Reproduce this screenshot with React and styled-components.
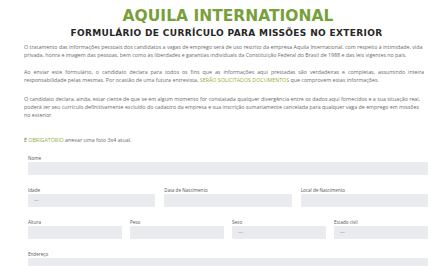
import React from "react";
import styled, { createGlobalStyle } from "styled-components";

const Global = createGlobalStyle`
  html, body { margin: 0; padding: 0; background: #ffffff; }
  body { font-family: "Open Sans", "Liberation Sans", sans-serif; }
  * { box-sizing: border-box; }
`;

const Page = styled.div`
  width: 448px;
  height: 266px;
  overflow: hidden;
  padding: 7px 24px 0 24px;
`;

const Header = styled.header`
  margin: 0 -4px 0 4px;
  text-align: center;
`;

const Title = styled.h1`
  margin: 0;
  font-family: "DejaVu Sans", "Liberation Sans", sans-serif;
  font-weight: 700;
  font-size: 15.5px;
  line-height: 18px;
  color: #77a03a;
`;

const Subtitle = styled.h2`
  margin: 2px 0 0 -3px;
  font-family: "DejaVu Sans", "Liberation Sans", sans-serif;
  font-weight: 700;
  font-size: 9px;
  line-height: 12px;
  letter-spacing: 0.35px;
  color: #262626;
`;

const Para = styled.p`
  margin: ${(p) => p.$mt || 0}px 0 0 0;
  font-size: 5.3px;
  line-height: 8px;
  color: #6b6b6b;
  text-align: ${(p) => (p.$justify ? "justify" : "left")};
`;

const Accent = styled.span`
  color: #8fae3c;
`;

const Form = styled.div`
  margin: 11px -4px 0 4px;
  display: flex;
  flex-direction: column;
  gap: 12px;
`;

const Row = styled.div`
  display: grid;
  grid-template-columns: repeat(${(p) => p.$cols}, 1fr);
  column-gap: ${(p) => (p.$cols === 4 ? 8 : 9)}px;
`;

const Field = styled.div`
  display: flex;
  flex-direction: column;
`;

const Label = styled.label`
  font-size: 4.6px;
  line-height: 6px;
  color: #555;
  margin-bottom: 1px;
`;

const Input = styled.div`
  height: 13px;
  background: #e9ebee;
  border-radius: 1px;
  font-size: 5px;
  line-height: 13px;
  color: #9a9a9a;
  padding-left: 6px;
`;

const F = ({ label, value }) => (
  <Field>
    <Label>{label}</Label>
    <Input>{value}</Input>
  </Field>
);

export default function App() {
  return (
    <>
      <Global />
      <Page>
        <Header>
          <Title>AQUILA INTERNATIONAL</Title>
          <Subtitle>FORMULÁRIO DE CURRÍCULO PARA MISSÕES NO EXTERIOR</Subtitle>
        </Header>
        <Para $mt={4}>
          O tratamento das informações pessoais dos candidatos a vagas de emprego será de uso restrito da empresa Aquila International, com respeito à intimidade, vida privada, honra e imagem das pessoas, bem como às liberdades e garantias individuais da Constituição Federal do Brasil de 1988 e das leis vigentes no país.
        </Para>
        <Para $mt={9} $justify>
          Ao enviar este formulário, o candidato declara para todos os fins que as informações aqui prestadas são verdadeiras e completas, assumindo inteira responsabilidade pelas mesmas. Por ocasião de uma futura entrevista, <Accent>SERÃO SOLICITADOS DOCUMENTOS</Accent> que comprovem estas informações.
        </Para>
        <Para $mt={11}>
          O candidato declara, ainda, estar ciente de que se em algum momento for constatada qualquer divergência entre os dados aqui fornecidos e a sua situação real, poderá ter seu currículo definitivamente excluído do cadastro da empresa e sua inscrição sumariamente cancelada para qualquer vaga de emprego em missões no exterior.
        </Para>
        <Para $mt={17}>
          É <Accent>OBRIGATÓRIO</Accent> anexar uma foto 3x4 atual.
        </Para>
        <Form>
          <Row $cols={1}>
            <F label="Nome" />
          </Row>
          <Row $cols={3}>
            <F label="Idade" value="—" />
            <F label="Data de Nascimento" />
            <F label="Local de Nascimento" />
          </Row>
          <Row $cols={4}>
            <F label="Altura" />
            <F label="Peso" />
            <F label="Sexo" value="—" />
            <F label="Estado civil" value="—" />
          </Row>
          <Row $cols={1}>
            <F label="Endereço" />
          </Row>
        </Form>
      </Page>
    </>
  );
}
